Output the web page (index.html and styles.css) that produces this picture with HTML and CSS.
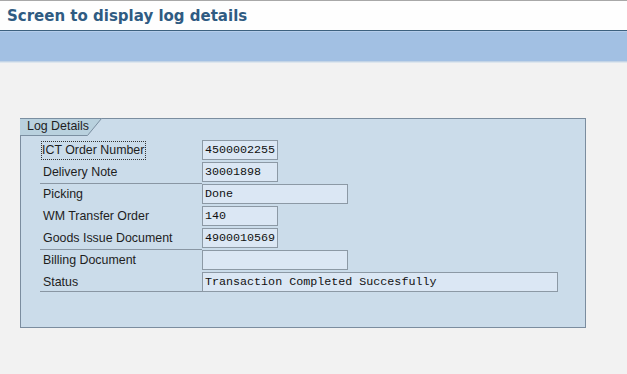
FILE: index.html
```html
<!DOCTYPE html>
<html>
<head>
<meta charset="utf-8">
<link rel="stylesheet" href="styles.css">
</head>
<body>
<div class="titlebar"><h1 class="title">Screen to display log details</h1></div>
<div class="toolbar"></div>
<div class="content">
  <div class="group">
    <div class="tab">
      <svg class="tab-bg" width="83" height="18" viewBox="0 0 83 18"><polygon points="0,0 82,0 68,17 0,17" fill="#b9d1de"/><polyline points="0,0.5 81.5,0.5 67.5,17.5 0,17.5" fill="none" stroke="#7b8fa1" stroke-width="1"/></svg>
      <span class="tab-text">Log Details</span>
    </div>
    <div class="rows">
      <div class="row"><div class="label"><span class="focus">ICT Order Number</span></div><div class="field short">4500002255</div></div>
      <div class="row"><div class="label">Delivery Note</div><div class="field short">30001898</div></div>
      <div class="row"><div class="label top-line">Picking</div><div class="field medium">Done</div></div>
      <div class="row"><div class="label">WM Transfer Order</div><div class="field short">140</div></div>
      <div class="row"><div class="label">Goods Issue Document</div><div class="field short">4900010569</div></div>
      <div class="row"><div class="label top-line">Billing Document</div><div class="field medium"></div></div>
      <div class="row"><div class="label bottom-line">Status</div><div class="field long">Transaction Completed Succesfully</div></div>
    </div>
  </div>
</div>
</body>
</html>
```
FILE: styles.css
```css
html, body {
  margin: 0;
  padding: 0;
}
body {
  background: #f2f2f2;
  width: 627px;
  height: 374px;
  overflow: hidden;
  font-family: "Liberation Sans", Arial, sans-serif;
}
.titlebar {
  background: #fefefe;
  border-top: 1px solid #a8a8a8;
  border-bottom: 1px solid #3d617f;
  height: 29px;
  display: flex;
  align-items: center;
  padding-left: 7px;
}
.title {
  margin: 0;
  font-family: "DejaVu Sans", Verdana, sans-serif;
  font-weight: bold;
  font-size: 15px;
  color: #2f5b82;
}
.toolbar {
  height: 29px;
  background: #a2c0e3;
  border-top: 1px solid #b6cdea;
  border-bottom: 1px solid #c3d4e6;
}
.content {
  padding: 55px 0 0 20px;
  border-top: 1px solid #dde6ee;
}
.group {
  width: 564px;
  height: 208px;
  background: #cbdcea;
  border: 1px solid #7b8d9f;
  position: relative;
}
.tab {
  position: relative;
  height: 17px;
  width: 82px;
  margin: -1px 0 0 -1px;
}
.tab-bg {
  position: absolute;
  left: 0;
  top: 0;
}
.tab-text {
  position: relative;
  display: block;
  padding-left: 7px;
  font-size: 12.4px;
  line-height: 17px;
  color: #1e1e1e;
}
.rows {
  display: flex;
  flex-direction: column;
  gap: 2px;
  padding: 5px 0 0 19px;
}
.row {
  display: flex;
  height: 20px;
}
.label {
  width: 159px;
  padding-left: 3px;
  font-size: 12.4px;
  line-height: 20px;
  color: #1e1e1e;
  box-sizing: content-box;
}
.label.top-line {
  border-top: 1px solid #8996a3;
  margin-top: -1px;
}
.label.bottom-line {
  border-bottom: 1px solid #8996a3;
}
.focus {
  outline: 1px dotted #333;
  outline-offset: 0px;
  padding: 0 1px 0 0;
  margin-left: -1px;
  display: inline-block;
  line-height: 17px;
}
.field {
  box-sizing: border-box;
  height: 20px;
  background: #dbe7f4;
  border: 1px solid #8c99a5;
  font-family: "Liberation Mono", "Courier New", monospace;
  font-size: 11.7px;
  line-height: 18px;
  padding-left: 2px;
  color: #111;
  white-space: nowrap;
}
.field.short { width: 76px; }
.field.medium { width: 146px; }
.field.long { width: 356px; }
```
